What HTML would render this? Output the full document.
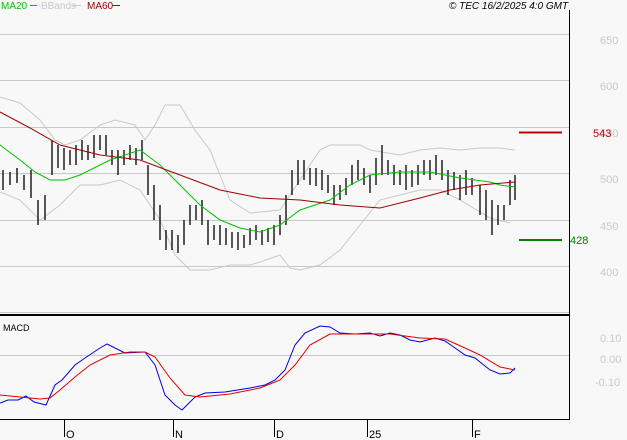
<!DOCTYPE html>
<html><head><style>
html,body{margin:0;padding:0;background:#f8f8f8;}
svg{display:block;font-family:"Liberation Sans",sans-serif;}
</style></head><body>
<svg width="627" height="440" viewBox="0 0 627 440">
<rect width="627" height="440" fill="#f8f8f8"/>
<text x="1" y="9" font-size="10" fill="#00c000">MA20</text>
<line x1="30" y1="5.5" x2="37" y2="5.5" stroke="#00c000"/>
<text x="41" y="9" font-size="10" fill="#c8c8c8">BBands</text>
<line x1="73" y1="5.5" x2="81" y2="5.5" stroke="#c8c8c8"/>
<text x="87" y="9" font-size="10" fill="#a00000">MA60</text>
<line x1="112" y1="5.5" x2="120" y2="5.5" stroke="#a00000"/>
<text x="449" y="9" font-size="10" font-style="italic" fill="#000">© TEC 16/2/2025 4:0 GMT</text>
<g stroke="#c8c8c8" stroke-width="1">
<line x1="0" y1="34.5" x2="569" y2="34.5"/><line x1="0" y1="80.5" x2="569" y2="80.5"/>
<line x1="0" y1="127.5" x2="569" y2="127.5"/><line x1="0" y1="173.5" x2="569" y2="173.5"/>
<line x1="0" y1="220.5" x2="569" y2="220.5"/><line x1="0" y1="266.5" x2="569" y2="266.5"/>
<line x1="0" y1="312.5" x2="569" y2="312.5"/><line x1="0" y1="355.5" x2="569" y2="355.5"/>
</g>
<g font-size="11" fill="#c8c8c8">
<text x="600" y="44">650</text><text x="600" y="90">600</text><text x="600" y="137">550</text>
<text x="600" y="183">500</text><text x="600" y="230">450</text><text x="600" y="276">400</text>
<text x="600" y="342">0.10</text><text x="600" y="363">0.00</text><text x="595" y="386">-0.10</text>
</g>
<line x1="569.5" y1="10" x2="569.5" y2="420" stroke="#000"/>
<line x1="0" y1="315" x2="570" y2="315" stroke="#000" stroke-width="2"/>
<line x1="0" y1="419.5" x2="570" y2="419.5" stroke="#000"/>
<g stroke="#000"><line x1="64.5" y1="419" x2="64.5" y2="437"/><line x1="173.5" y1="419" x2="173.5" y2="437"/><line x1="274.5" y1="419" x2="274.5" y2="437"/><line x1="367.5" y1="419" x2="367.5" y2="437"/><line x1="472.5" y1="419" x2="472.5" y2="437"/></g>
<g font-size="11" fill="#000"><text x="66" y="438">O</text><text x="175" y="438">N</text><text x="276" y="438">D</text><text x="369" y="438">25</text><text x="474" y="438">F</text></g>
<text x="3" y="331" font-size="9" fill="#000">MACD</text>
<polyline fill="none" stroke="#c8c8c8" points="0,97 20,103 40,120 55,140 65,145 80,140 100,125 115,120 135,125 145,140 155,125 165,105 180,105 195,130 210,150 220,175 230,200 250,213 280,210 300,180 320,150 330,145 360,145 370,150 400,155 420,150 440,148 460,150 480,148 500,148 515,150"/>
<polyline fill="none" stroke="#c8c8c8" points="0,192 20,200 40,220 60,205 80,185 100,185 120,180 140,190 160,220 175,255 190,270 210,270 230,265 250,265 260,262 280,255 290,268 300,270 320,265 340,250 360,225 380,200 400,195 420,190 440,190 460,200 490,218 510,223"/>
<path stroke="#000" stroke-width="1.3" fill="none" d="M3 170V190M10 172V185M17 168V183M24 175V190M31 170V198M38 200V225M45 195V220M52 140V175M58 145V168M64 148V170M70 150V165M76 145V165M82 140V160M88 145V160M94 135V158M100 135V150M106 135V155M112 150V165M118 150V175M124 150V165M130 145V160M136 148V165M142 140V160M148 165V195M154 185V220M160 205V240M166 230V250M172 230V250M178 235V253M184 220V245M190 205V225M196 205V220M202 200V225M208 220V245M214 225V240M220 225V245M226 228V245M232 232V248M238 232V250M244 235V248M250 228V245M256 225V240M262 230V245M268 228V242M274 225V245M280 215V235M286 195V225M292 170V195M298 160V185M304 160V180M310 168V185M316 168V186M322 170V190M328 175V193M334 185V205M340 185V200M346 178V195M352 165V185M358 160V180M364 168V185M370 175V193M376 158V185M382 145V175M388 160V175M394 165V185M400 170V185M406 165V190M412 170V187M418 165V185M424 160V175M430 160V180M436 155V175M442 160V180M448 170V195M454 172V190M460 175V200M466 170V195M472 178V195M480 185V215M486 190V220M492 200V235M498 205V225M504 205V220M510 180V205M515 175V200"/>
<polyline fill="none" stroke="#00c000" points="0,145 20,160 35,172 50,180 65,180 80,175 110,160 140,150 160,165 180,185 200,205 220,220 240,228 260,232 280,225 300,210 330,200 350,185 370,175 400,172 430,172 460,178 490,182 500,185 515,187"/>
<polyline fill="none" stroke="#a00000" points="0,112 30,128 60,145 100,155 140,160 180,175 220,190 260,198 300,200 340,205 380,208 420,198 450,190 480,185 515,182"/>
<line x1="519" y1="132.5" x2="562" y2="132.5" stroke="#c00000" stroke-width="2"/>
<text x="593" y="137" font-size="11" fill="#c00000">543</text>
<line x1="519" y1="240" x2="562" y2="240" stroke="#008000" stroke-width="2"/>
<text x="570" y="244" font-size="11" fill="#008000">428</text>
<polyline fill="none" stroke="#0000e0" points="0,403 8,400 18,400 26,396 34,402 46,405 55,385 62,380 75,365 85,358 100,348 107,344 125,353 145,352 155,365 165,395 175,405 182,410 195,397 205,393 225,392 250,388 265,385 275,380 285,370 295,345 305,333 320,326 330,327 340,333 355,334 370,333 380,336 390,333 400,335 410,340 420,342 435,338 445,341 455,348 465,355 475,358 490,370 500,374 510,373 515,368"/>
<polyline fill="none" stroke="#e00000" points="0,395 20,397 40,399 50,398 60,390 75,377 90,365 110,355 130,352 145,352 155,357 170,378 185,395 200,397 230,394 260,388 280,380 295,365 310,345 330,334 360,334 390,334 420,338 445,339 465,348 480,355 500,367 515,370"/>
</svg>
</body></html>
